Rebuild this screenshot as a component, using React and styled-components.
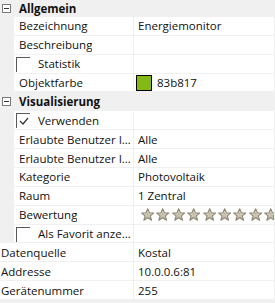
import React from "react";
import styled, { createGlobalStyle } from "styled-components";

const Global = createGlobalStyle`
  html, body { margin: 0; padding: 0; background: #f0f0f0; }
  body { font-family: "Open Sans", "Liberation Sans", sans-serif; font-size: 11.5px; color: #111; }
`;

const Grid = styled.div`
  width: 274px;
  display: flex;
  flex-direction: column;
`;

const Header = styled.div`
  height: ${(p) => p.$h}px;
  display: flex;
  align-items: center;
  font-weight: 700;
  color: #111;
`;

const Expander = styled.span`
  box-sizing: border-box;
  width: 9px;
  height: 9px;
  margin: 0 8px 0 2px;
  border: 1px solid #7a7a7a;
  background: #fff;
  position: relative;
  &::after {
    content: "";
    position: absolute;
    left: 1px;
    right: 1px;
    top: 3px;
    height: 1px;
    background: #333;
  }
`;

const Row = styled.div`
  height: 18.87px;
  display: flex;
  padding-left: ${(p) => (p.$nested ? 14 : 0)}px;
`;

const Cell = styled.div`
  box-sizing: border-box;
  height: 100%;
  background: #fff;
  border-bottom: 1px solid #f0f0f0;
  display: flex;
  align-items: center;
  white-space: nowrap;
  overflow: hidden;
`;

const NameCell = styled(Cell)`
  width: ${(p) => (p.$nested ? 120 : 134)}px;
  flex: none;
  border-right: 1px solid #f0f0f0;
  padding-left: ${(p) => (p.$check ? 2 : p.$nested ? 5 : 1)}px;
  padding-right: 1px;
  gap: 8px;
  span.label { overflow: hidden; text-overflow: ellipsis; }
`;

const ValueCell = styled(Cell)`
  flex: 1;
  padding-left: 4px;
`;

const Box = styled.span`
  box-sizing: border-box;
  flex: none;
  width: 14px;
  height: 15px;
  border-top: 1px solid #5a5a5a;
  border-left: 1px solid #5a5a5a;
  display: flex;
  align-items: center;
  justify-content: center;
  margin-top: 1px;
`;

const Swatch = styled.span`
  box-sizing: border-box;
  width: 16px;
  height: 16px;
  background: #83b817;
  border: 1px solid #000;
  margin-right: 5px;
  margin-left: -2px;
`;

const Stars = styled.div`
  display: flex;
  gap: 2px;
  margin-left: 3px;
`;

const Star = () => (
  <svg width="13.4" height="13" viewBox="0 0 20 19">
    <defs>
      <linearGradient id="sg" x1="0" y1="0" x2="0" y2="1">
        <stop offset="0" stopColor="#e8e4d8" />
        <stop offset="1" stopColor="#b8b09a" />
      </linearGradient>
    </defs>
    <path
      d="M10 1 L12.6 7 L19 7.4 L14 11.6 L15.7 18 L10 14.4 L4.3 18 L6 11.6 L1 7.4 L7.4 7 Z"
      fill="url(#sg)"
      stroke="#8d8672"
      strokeWidth="1.6"
      strokeLinejoin="round"
    />
    <path d="M10 6 L11.5 9.5 L8.5 9.5 Z" fill="#9c9480" opacity="0.6" />
  </svg>
);

const Check = () => (
  <svg width="10" height="8" viewBox="0 0 10 8">
    <path d="M1 4 L4 7 L9 1" fill="none" stroke="#333" strokeWidth="1.2" />
  </svg>
);

const Prop = ({ name, children, nested = true }) => (
  <Row $nested={nested}>
    <NameCell $nested={nested}>
      <span className="label">{name}</span>
    </NameCell>
    <ValueCell>{children}</ValueCell>
  </Row>
);

const CheckRow = ({ label, checked }) => (
  <Row $nested>
    <NameCell $nested $check>
      <Box>{checked && <Check />}</Box>
      <span className="label">{label}</span>
    </NameCell>
    <ValueCell />
  </Row>
);

export default function App() {
  return (
    <>
      <Global />
      <Grid>
        <Header $h={17}>
          <Expander />
          Allgemein
        </Header>
        <Prop name="Bezeichnung">Energiemonitor</Prop>
        <Prop name="Beschreibung" />
        <CheckRow label="Statistik" />
        <Prop name="Objektfarbe">
          <Swatch />
          83b817
        </Prop>
        <Header $h={19}>
          <Expander />
          Visualisierung
        </Header>
        <CheckRow label="Verwenden" checked />
        <Prop name="Erlaubte Benutzer Interaktion">Alle</Prop>
        <Prop name="Erlaubte Benutzer Interaktion">Alle</Prop>
        <Prop name="Kategorie">Photovoltaik</Prop>
        <Prop name="Raum">1 Zentral</Prop>
        <Prop name="Bewertung">
          <Stars>
            {Array.from({ length: 10 }).map((_, i) => (
              <Star key={i} />
            ))}
          </Stars>
        </Prop>
        <CheckRow label="Als Favorit anzeigen" />
        <Prop name="Datenquelle" nested={false}>Kostal</Prop>
        <Prop name="Addresse" nested={false}>10.0.0.6:81</Prop>
        <Prop name="Gerätenummer" nested={false}>255</Prop>
      </Grid>
    </>
  );
}
